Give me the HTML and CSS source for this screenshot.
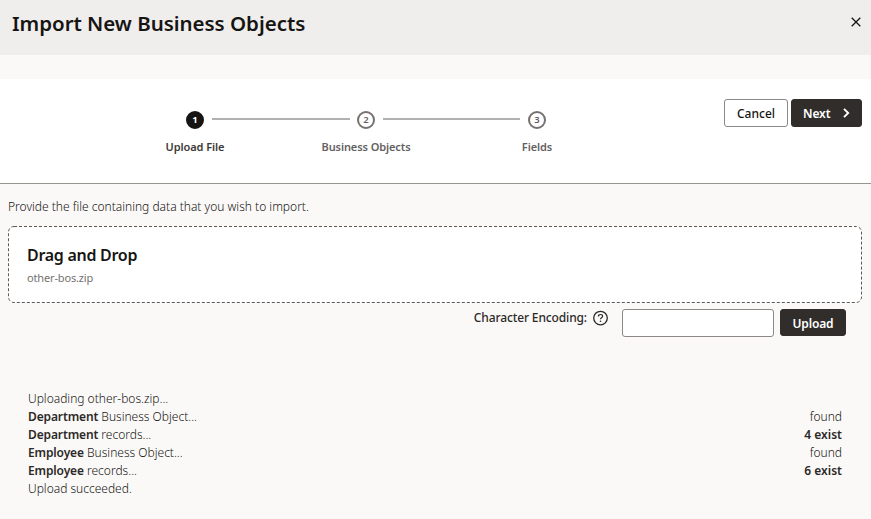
FILE: index.html
```html
<!DOCTYPE html>
<html lang="en">
<head>
<meta charset="utf-8">
<title>Import New Business Objects</title>
<link rel="stylesheet" href="styles.css">
</head>
<body>
<header class="header">
  <h1 class="title">Import New Business Objects</h1>
  <button class="close" aria-label="Close"><svg width="10" height="10" viewBox="0 0 10 10"><path d="M.7.7l8.6 8.6M9.3.7L.7 9.3" fill="none" stroke="#161513" stroke-width="1.3"/></svg></button>
</header>
<section class="wizard">
  <ol class="train">
    <li class="step current"><span class="dot">1</span><span class="step-label">Upload File</span></li>
    <li class="line"></li>
    <li class="step"><span class="dot">2</span><span class="step-label">Business Objects</span></li>
    <li class="line second"></li>
    <li class="step"><span class="dot">3</span><span class="step-label">Fields</span></li>
  </ol>
  <div class="actions">
    <button class="btn cancel">Cancel</button>
    <button class="btn dark next"><span>Next</span><svg width="7" height="10" viewBox="0 0 7 10"><path d="M1 .8L5.2 5 1 9.2" fill="none" stroke="#fff" stroke-width="1.9"/></svg></button>
  </div>
</section>
<main class="main">
  <p class="intro">Provide the file containing data that you wish to import.</p>
  <div class="drop">
    <svg class="dash" width="854" height="77"><rect x=".5" y=".5" width="853" height="76" rx="5.5" fill="#fff" stroke="#5c5956" stroke-dasharray="3 2"/></svg>
    <h2 class="drop-title">Drag and Drop</h2>
    <p class="drop-file">other-bos.zip</p>
  </div>
  <div class="encoding">
    <label class="enc-label" for="enc">Character Encoding:</label>
    <svg class="help" width="15" height="16" viewBox="0 -.6 15 16"><circle cx="7.5" cy="7.5" r="6.8" fill="none" stroke="#2b2927" stroke-width="1.3"/><path d="M5.4 6C5.4 4.6 6.3 3.9 7.5 3.9s2.1.7 2.1 1.8c0 1.5-2.1 1.5-2.1 3" fill="none" stroke="#2b2927" stroke-width="1.2"/><circle cx="7.5" cy="10.7" r=".8" fill="#2b2927"/></svg>
    <input class="enc-input" id="enc" type="text">
    <button class="btn dark upload">Upload</button>
  </div>
  <div class="log">
    <div class="row"><span>Uploading other-bos.zip...</span></div>
    <div class="row"><span><b>Department</b> Business Object...</span><span class="found">found</span></div>
    <div class="row"><span><b>Department</b> records...</span><b class="count">4 exist</b></div>
    <div class="row"><span><b>Employee</b> Business Object...</span><span class="found">found</span></div>
    <div class="row"><span><b>Employee</b> records...</span><b class="count">6 exist</b></div>
    <div class="row"><span>Upload succeeded.</span></div>
  </div>
</main>
</body>
</html>
```
FILE: styles.css
```css
* { box-sizing: border-box; }
body { margin: 0; background: #fbf9f8; color: #3b3936; font: 12px/18px "Noto Sans", sans-serif; height: 519px; overflow: hidden; }
h1, h2, p, ol { margin: 0; padding: 0; }
button { font: inherit; cursor: pointer; padding: 0; }
.header { height: 55px; background: #f0eeec; display: flex; justify-content: space-between; padding: 0 10px 0 12px; }
.title { font-size: 20.5px; line-height: 28px; padding-top: 9px; font-weight: 600; color: #161513; white-space: nowrap; letter-spacing: -.03px; }
.close { border: 0; background: none; width: 10px; height: 10px; margin-top: 17px; display: flex; }
.wizard { margin-top: 24px; height: 105px; background: #fff; border-bottom: 1px solid #97938f; display: flex; justify-content: space-between; padding: 20px 9px 0 186px; }
.train { list-style: none; display: flex; padding-top: 12px; }
.step { width: 18px; display: flex; flex-direction: column; align-items: center; color: #64615f; }
.dot { width: 18px; height: 18px; border: 2px solid #757371; border-radius: 50%; font-size: 9.5px; line-height: 13px; text-align: center; font-weight: 600; }
.step-label { margin-top: 9px; font-size: 11px; line-height: 18px; font-weight: 600; white-space: nowrap; letter-spacing: -.09px; }
.current { color: #3b3936; }
.current .dot { background: #161513; border-color: #161513; color: #fff; font-weight: 700; }
.line { width: 138px; height: 2px; background: #b3b1af; margin: 7px 7px 0 8px; }
.line.second { width: 137px; margin: 7px 8px 0 8px; }
.actions { display: flex; gap: 3px; }
.btn { height: 28px; border-radius: 3px; border: 1px solid #8b8886; background: #fff; color: #161513; font-size: 12px; font-weight: 600; display: flex; align-items: center; justify-content: center; padding-top: 2px; }
.cancel { width: 64px; font-weight: 500; }
.dark { background: #312d2a; border-color: #312d2a; color: #fff; }
.next { width: 71px; justify-content: space-between; padding: 2px 11px 0; }
.next span { letter-spacing: -.1px; }
.next svg { margin-top: -2px; }
.main { padding: 14px 9px 0 8px; }
.intro { line-height: 18px; font-weight: 300; color: #161513; letter-spacing: 0; }
.drop { position: relative; height: 77px; margin-top: 10px; padding: 18px 19px; }
.dash { position: absolute; left: 0; top: 0; }
.drop-title { position: relative; font-size: 16px; line-height: 22px; font-weight: 600; color: #161513; letter-spacing: -.28px; }
.drop-file { position: relative; font-size: 11px; line-height: 16px; margin-top: 4px; color: #75726f; letter-spacing: -.15px; }
.encoding { display: flex; justify-content: flex-end; padding: 6px 16px 0 0; }
.enc-label { line-height: 17px; color: #2b2927; font-weight: 500; letter-spacing: -.13px; }
.help { margin: 1px 14px 0 6px; }
.enc-input { width: 152px; height: 28px; border: 1px solid #8b8886; border-radius: 3px; background: #fff; }
.upload { width: 66px; height: 27px; margin-left: 6px; letter-spacing: -.15px; }
.log { padding: 53px 20px 0; font-weight: 300; color: #161513; }
.row { display: flex; justify-content: space-between; height: 18px; }
.row b { font-weight: 600; color: #2b2927; letter-spacing: -.13px; }
.row .count { letter-spacing: 0; }
```
